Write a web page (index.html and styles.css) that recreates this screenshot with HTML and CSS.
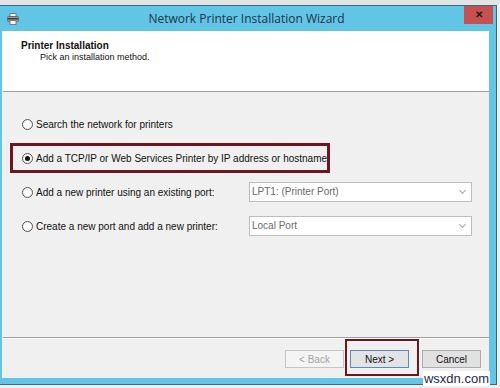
FILE: index.html
```html
<!DOCTYPE html>
<html lang="en">
  <head>
    <meta charset="UTF-8" />
    <title>Network Printer Installation Wizard</title>
    <link rel="stylesheet" href="styles.css">
  </head>
  <body>
    <div class="backdrop"></div>

    <div class="window">
      <div class="titlebar">
        <svg class="app-icon" width="12" height="12" viewBox="0 0 12 12">
          <rect x="3" y="0.5" width="6" height="3" fill="#f4f4f4" stroke="#7d7d7d" />
          <rect x="0.5" y="3.5" width="11" height="5" rx="1" fill="#9a9a9a" stroke="#6a6a6a" />
          <rect x="1" y="5" width="10" height="1.5" fill="#3f3f3f" />
          <rect x="3" y="7.5" width="6" height="4" fill="#f7f7f7" stroke="#7d7d7d" />
        </svg>
        <div class="title">Network Printer Installation Wizard</div>
        <div class="close">&#x2715;</div>
      </div>

      <div class="frame">
        <div class="client">
          <div class="header">
            <div class="header-title">Printer Installation</div>
            <div class="header-sub">Pick an installation method.</div>
          </div>

          <div class="content">
            <div class="option">
              <label class="radio-label"><span class="radio"></span>Search the network for printers</label>
            </div>
            <div class="option marked">
              <label class="radio-label"><span class="radio checked"></span>Add a TCP/IP or Web Services Printer by IP address or hostname</label>
              <span class="callout"></span>
            </div>
            <div class="option">
              <label class="radio-label"><span class="radio"></span>Add a new printer using an existing port:</label>
              <div class="select">LPT1: (Printer Port)<span class="chev"></span></div>
            </div>
            <div class="option">
              <label class="radio-label"><span class="radio"></span>Create a new port and add a new printer:</label>
              <div class="select">Local Port<span class="chev"></span></div>
            </div>
          </div>

          <div class="footer">
            <button class="btn disabled">&lt; Back</button>
            <div class="btn-wrap">
              <button class="btn default">Next &gt;</button>
              <span class="callout next-callout"></span>
            </div>
            <button class="btn cancel">Cancel</button>
          </div>
        </div>
      </div>
    </div>

    <div class="watermark">wsxdn.com</div>
  </body>
</html>
```

FILE: styles.css
```css
:root {
  --frame-color: #62c5e6;
  --frame-edge: #2c6f8c;
  --face: #f0f0f0;
  --line: #a0a0a0;
  --mark: #6d1522;
}

* {
  margin: 0;
  padding: 0;
  box-sizing: border-box;
}

body {
  width: 500px;
  height: 388px;
  overflow: hidden;
  position: relative;
  background-color: #efefef;
  font-family: 'Liberation Sans', Arial, sans-serif;
  font-size: 10px;
  color: #111;
}

.backdrop {
  height: 5px;
  background-color: #e4e4e4;
}

.window {
  width: 497px;
  background-color: var(--frame-color);
  border: 1px solid var(--frame-edge);
  border-left: none;
}

.titlebar {
  height: 25px;
  display: flex;
  align-items: center;
  padding-left: 7px;
}

.app-icon {
  flex: none;
}

.title {
  flex: 1;
  text-align: center;
  font-family: 'Open Sans', 'Noto Sans', sans-serif;
  font-size: 12px;
  color: #1c3448;
  padding-left: 10px;
}

.close {
  align-self: flex-start;
  width: 29px;
  height: 18px;
  margin-right: 3px;
  background-color: #c75050;
  color: #1a1a1a;
  font-size: 10px;
  font-weight: bold;
  line-height: 18px;
  text-align: center;
}

.frame {
  padding: 0 7px 6px 2px;
}

.client {
  background-color: var(--face);
  border-left: 1px solid #e8f6fb;
}

.header {
  height: 61px;
  background-color: white;
  border-bottom: 1px solid var(--line);
  padding: 8px 0 0 18px;
}

.header-title {
  font-weight: bold;
  font-size: 10px;
  line-height: 13px;
}

.header-sub {
  padding-left: 19px;
  font-size: 9px;
  line-height: 13px;
  margin-top: -1px;
}

.content {
  height: 246px;
  padding: 22px 0 0 19px;
  display: flex;
  flex-direction: column;
  gap: 14px;
  border-bottom: 1px solid var(--line);
}

.option {
  position: relative;
  height: 20px;
  display: grid;
  grid-template-columns: 227px 223px;
  align-items: center;
}

.radio-label {
  display: flex;
  align-items: center;
  gap: 3px;
  white-space: nowrap;
}

.radio {
  flex: none;
  width: 11px;
  height: 11px;
  border: 1px solid #555;
  border-radius: 50%;
  background: radial-gradient(circle, #ffffff 40%, #e6e6e6 100%);
  display: flex;
  align-items: center;
  justify-content: center;
}

.radio.checked::after {
  content: "";
  width: 5px;
  height: 5px;
  border-radius: 50%;
  background-color: #111;
}

.callout {
  position: absolute;
  left: -12px;
  top: -5px;
  width: 320px;
  height: 30px;
  border: 3px solid var(--mark);
  pointer-events: none;
}

.select {
  position: relative;
  height: 20px;
  background-color: white;
  border: 1px solid #bdbdbd;
  color: #6a6a6a;
  line-height: 18px;
  padding-left: 2px;
}

.chev {
  position: absolute;
  right: 6px;
  top: 5px;
  width: 5px;
  height: 5px;
  border-right: 1px solid #a8a8a8;
  border-bottom: 1px solid #a8a8a8;
  transform: rotate(45deg);
}

.footer {
  height: 40px;
  border-top: 1px solid white;
  display: flex;
  justify-content: flex-end;
  align-items: flex-start;
  padding: 11px 8px 0 0;
}

.btn {
  width: 59px;
  height: 18px;
  font-family: 'Liberation Sans', Arial, sans-serif;
  font-size: 10px;
  border: 1px solid #adadad;
  background-color: #e1e1e1;
  color: #111;
}

.btn.disabled {
  background-color: #f4f4f4;
  border-color: #c6c6c6;
  color: #a3a3a3;
}

.btn.default {
  border-color: #4f8fc4;
  background-color: #e3e3e3;
}

.btn-wrap {
  position: relative;
  margin: 0 13px 0 6px;
  display: flex;
}

.next-callout {
  left: -5px;
  top: -11px;
  width: 74px;
  height: 37px;
  border-width: 2px;
}

.watermark {
  position: absolute;
  right: 10px;
  bottom: 2px;
  background-color: white;
  color: #1b2a48;
  font-family: 'Liberation Sans', Arial, sans-serif;
  font-size: 13px;
  line-height: 15px;
  padding: 0 1px;
}
```
